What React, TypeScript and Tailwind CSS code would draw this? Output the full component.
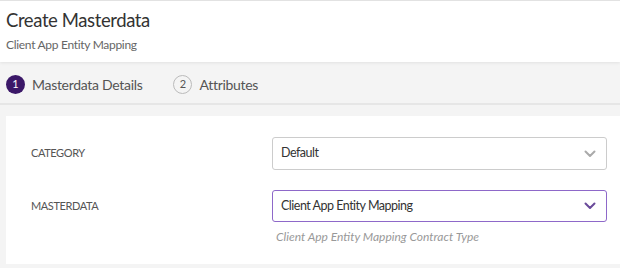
import React from "react";

function Chevron({ color }: { color: string }) {
  return (
    <svg width="12" height="8" viewBox="0 0 12 8" fill="none">
      <path d="M1.5 1.5 L6 6 L10.5 1.5" stroke={color} strokeWidth="2" strokeLinecap="round" strokeLinejoin="round" />
    </svg>
  );
}

export default function App() {
  return (
    <div className="w-[620px] h-[268px] bg-[#f4f4f4] overflow-hidden text-[#444]" style={{ fontFamily: '"Lato", "Liberation Sans", sans-serif' }}>
      <div className="border-t border-[#e2e2e2] bg-white h-[62px] pl-[6px] pt-[6px] shadow-[0_1px_3px_rgba(0,0,0,0.08)] relative">
        <div className="text-[18.5px] leading-[26px] tracking-[-0.4px] text-[#333]">Create Masterdata</div>
        <div className="text-[12px] leading-[16px] mt-[4px] tracking-[-0.3px] text-[#666]">Client App Entity Mapping</div>
      </div>
      <div className="h-[43px] flex items-center pl-[6px] pt-[3px] border-b-2 border-[#e6e6e6]">
        <div className="flex items-center">
          <div className="w-[19px] h-[19px] rounded-full bg-[#3b1868] text-white text-[11px] flex items-center justify-center">1</div>
          <span className="ml-[7px] text-[14px] tracking-[-0.3px] text-[#555]">Masterdata Details</span>
        </div>
        <div className="flex items-center ml-[31px]">
          <div className="w-[19px] h-[19px] rounded-full border border-[#bbb] text-[#555] text-[11px] flex items-center justify-center">2</div>
          <span className="ml-[7px] text-[14px] tracking-[-0.3px] text-[#555]">Attributes</span>
        </div>
      </div>
      <div className="pl-[6px] pt-[11px]">
        <div className="bg-white h-[148px] pl-[25px] pr-[13px] pt-[21px]">
          <div className="flex items-center h-[33px]">
            <div className="w-[241px] text-[11px] tracking-[-0.4px] text-[#555] uppercase">Category</div>
            <div className="flex-1 h-[33px] border border-[#cccccc] rounded-[3px] flex items-center justify-between pl-[8px] pr-[10px]">
              <span className="text-[12.5px] tracking-[-0.5px] text-[#333]">Default</span>
              <Chevron color="#aaaaaa" />
            </div>
          </div>
          <div className="flex items-center h-[32px] mt-[20px]">
            <div className="w-[241px] text-[11px] tracking-[-0.4px] text-[#555] uppercase">Masterdata</div>
            <div className="flex-1 h-[32px] border border-[#8e68c9] rounded-[3px] flex items-center justify-between pl-[8px] pr-[10px]">
              <span className="text-[12.5px] tracking-[-0.5px] text-[#333]">Client App Entity Mapping</span>
              <Chevron color="#6a4a9a" />
            </div>
          </div>
          <div className="ml-[245px] mt-[6px] text-[12px] italic text-[#999]">Client App Entity Mapping Contract Type</div>
        </div>
      </div>
    </div>
  );
}
